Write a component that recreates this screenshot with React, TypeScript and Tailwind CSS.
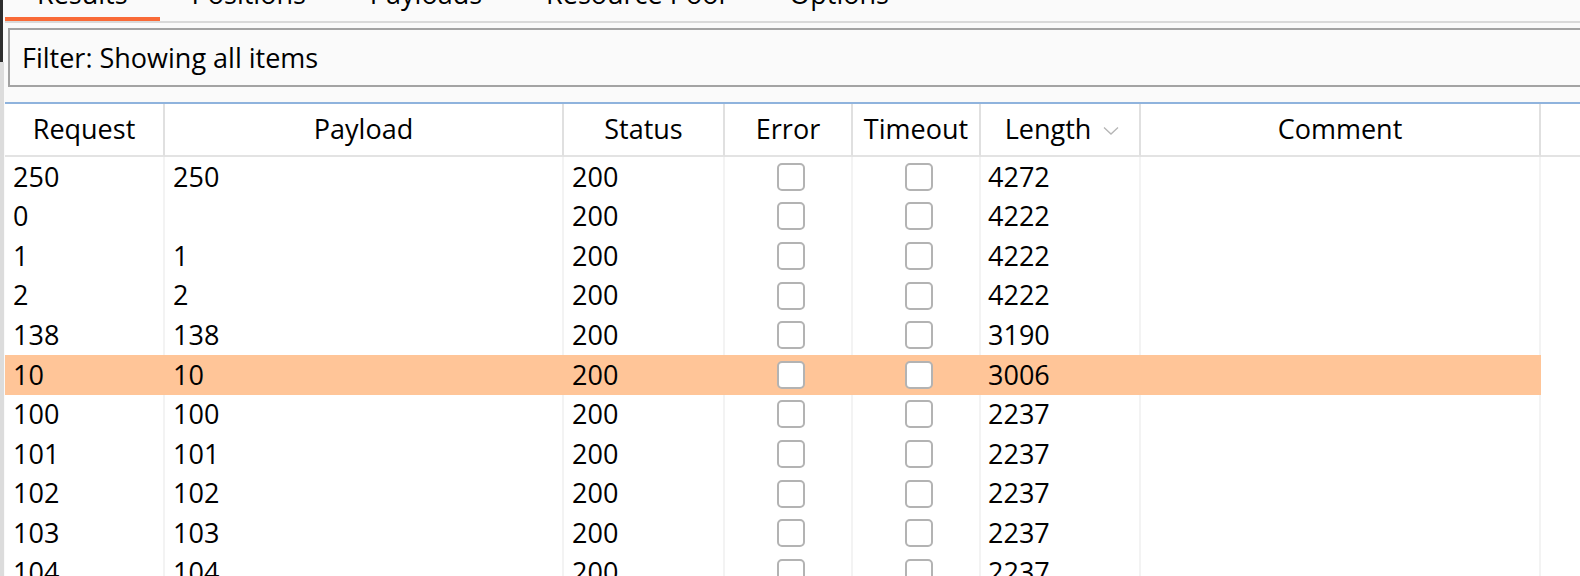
import React from "react";

type Row = { req: string; payload: string; status: string; length: string };

const rows: Row[] = [
  { req: "250", payload: "250", status: "200", length: "4272" },
  { req: "0", payload: "", status: "200", length: "4222" },
  { req: "1", payload: "1", status: "200", length: "4222" },
  { req: "2", payload: "2", status: "200", length: "4222" },
  { req: "138", payload: "138", status: "200", length: "3190" },
  { req: "10", payload: "10", status: "200", length: "3006" },
  { req: "100", payload: "100", status: "200", length: "2237" },
  { req: "101", payload: "101", status: "200", length: "2237" },
  { req: "102", payload: "102", status: "200", length: "2237" },
  { req: "103", payload: "103", status: "200", length: "2237" },
  { req: "104", payload: "104", status: "200", length: "2237" },
];

const tabs = ["Results", "Positions", "Payloads", "Resource Pool", "Options"];

const cols = "grid grid-cols-[160px_399px_161px_128px_128px_160px_400px_1fr]";

const Checkbox = () => (
  <div className="w-[28px] h-[28px] rounded-[5px] border-2 border-[#b3b3b3] bg-white" />
);

const HeaderCell: React.FC<{ children?: React.ReactNode; last?: boolean }> = ({ children, last }) => (
  <div
    className={`h-[53px] flex items-center justify-center border-b-2 border-[#e3e3e3] ${
      last ? "" : "border-r-2 border-r-[#e0e0e0]"
    }`}
  >
    {children}
  </div>
);

export default function App() {
  return (
    <div className="w-[1580px] h-[576px] overflow-hidden bg-[#fafafa] flex font-['Open_Sans',sans-serif] text-[27px] text-black">
      {/* window edge on the left */}
      <div className="w-[5px] shrink-0 flex flex-col">
        <div className="h-[62px] w-[3px] shrink-0 bg-[#2e2e2e]" />
        <div className="flex-1 w-[4px] bg-[#dcdcdc]" />
      </div>

      <div className="flex-1 min-w-0 flex flex-col">
        {/* tabs */}
        <div className="h-[23px] shrink-0 flex border-b-2 border-[#d9d9d9]">
          {tabs.map((t, i) => (
            <div key={t} className="relative px-8 h-full">
              <span className="block leading-[26px] mt-[-19px] whitespace-nowrap">{t}</span>
              {i === 0 && <div className="absolute left-0 right-0 bottom-0 h-[4px] bg-[#f96a37]" />}
            </div>
          ))}
        </div>

        {/* filter bar */}
        <div className="shrink-0 mt-[5px] ml-[3px] mr-[-10px] h-[59px] border-2 border-[#a3a3a3] bg-[#fafafa] flex items-center pl-[12px]">
          <span className="leading-none">Filter: Showing all items</span>
        </div>

        {/* results table */}
        <div className="shrink-0 mt-[15px] border-t-2 border-[#8fb3dd] bg-white">
          <div className={cols}>
            <HeaderCell>Request</HeaderCell>
            <HeaderCell>Payload</HeaderCell>
            <HeaderCell>Status</HeaderCell>
            <HeaderCell>Error</HeaderCell>
            <HeaderCell>Timeout</HeaderCell>
            <HeaderCell>
              <span className="pl-[4px]">Length</span>
              <svg width="16" height="10" viewBox="0 0 16 10" className="ml-[12px] mt-[2px]">
                <path d="M1 1.5 L8 8 L15 1.5" fill="none" stroke="#b5b5b5" strokeWidth="1.3" />
              </svg>
            </HeaderCell>
            <HeaderCell>Comment</HeaderCell>
            <HeaderCell last />
          </div>

          {rows.map((r, i) => {
            const hl = i === 5;
            const cell = `h-[39.6px] flex items-center border-r-2 ${
              hl ? "bg-[#ffc598] border-r-[#ffc598]" : "border-r-[#f3f3f3]"
            }`;
            return (
              <div key={i} className={cols}>
                <div className={`${cell} pl-[8px]`}>{r.req}</div>
                <div className={`${cell} pl-[8px]`}>{r.payload}</div>
                <div className={`${cell} pl-[8px]`}>{r.status}</div>
                <div className={`${cell} justify-center pl-[6px]`}>
                  <Checkbox />
                </div>
                <div className={`${cell} justify-center pl-[6px]`}>
                  <Checkbox />
                </div>
                <div className={`${cell} pl-[7px]`}>{r.length}</div>
                <div className={cell} />
                <div className="h-[39.6px]" />
              </div>
            );
          })}
        </div>
      </div>
    </div>
  );
}
